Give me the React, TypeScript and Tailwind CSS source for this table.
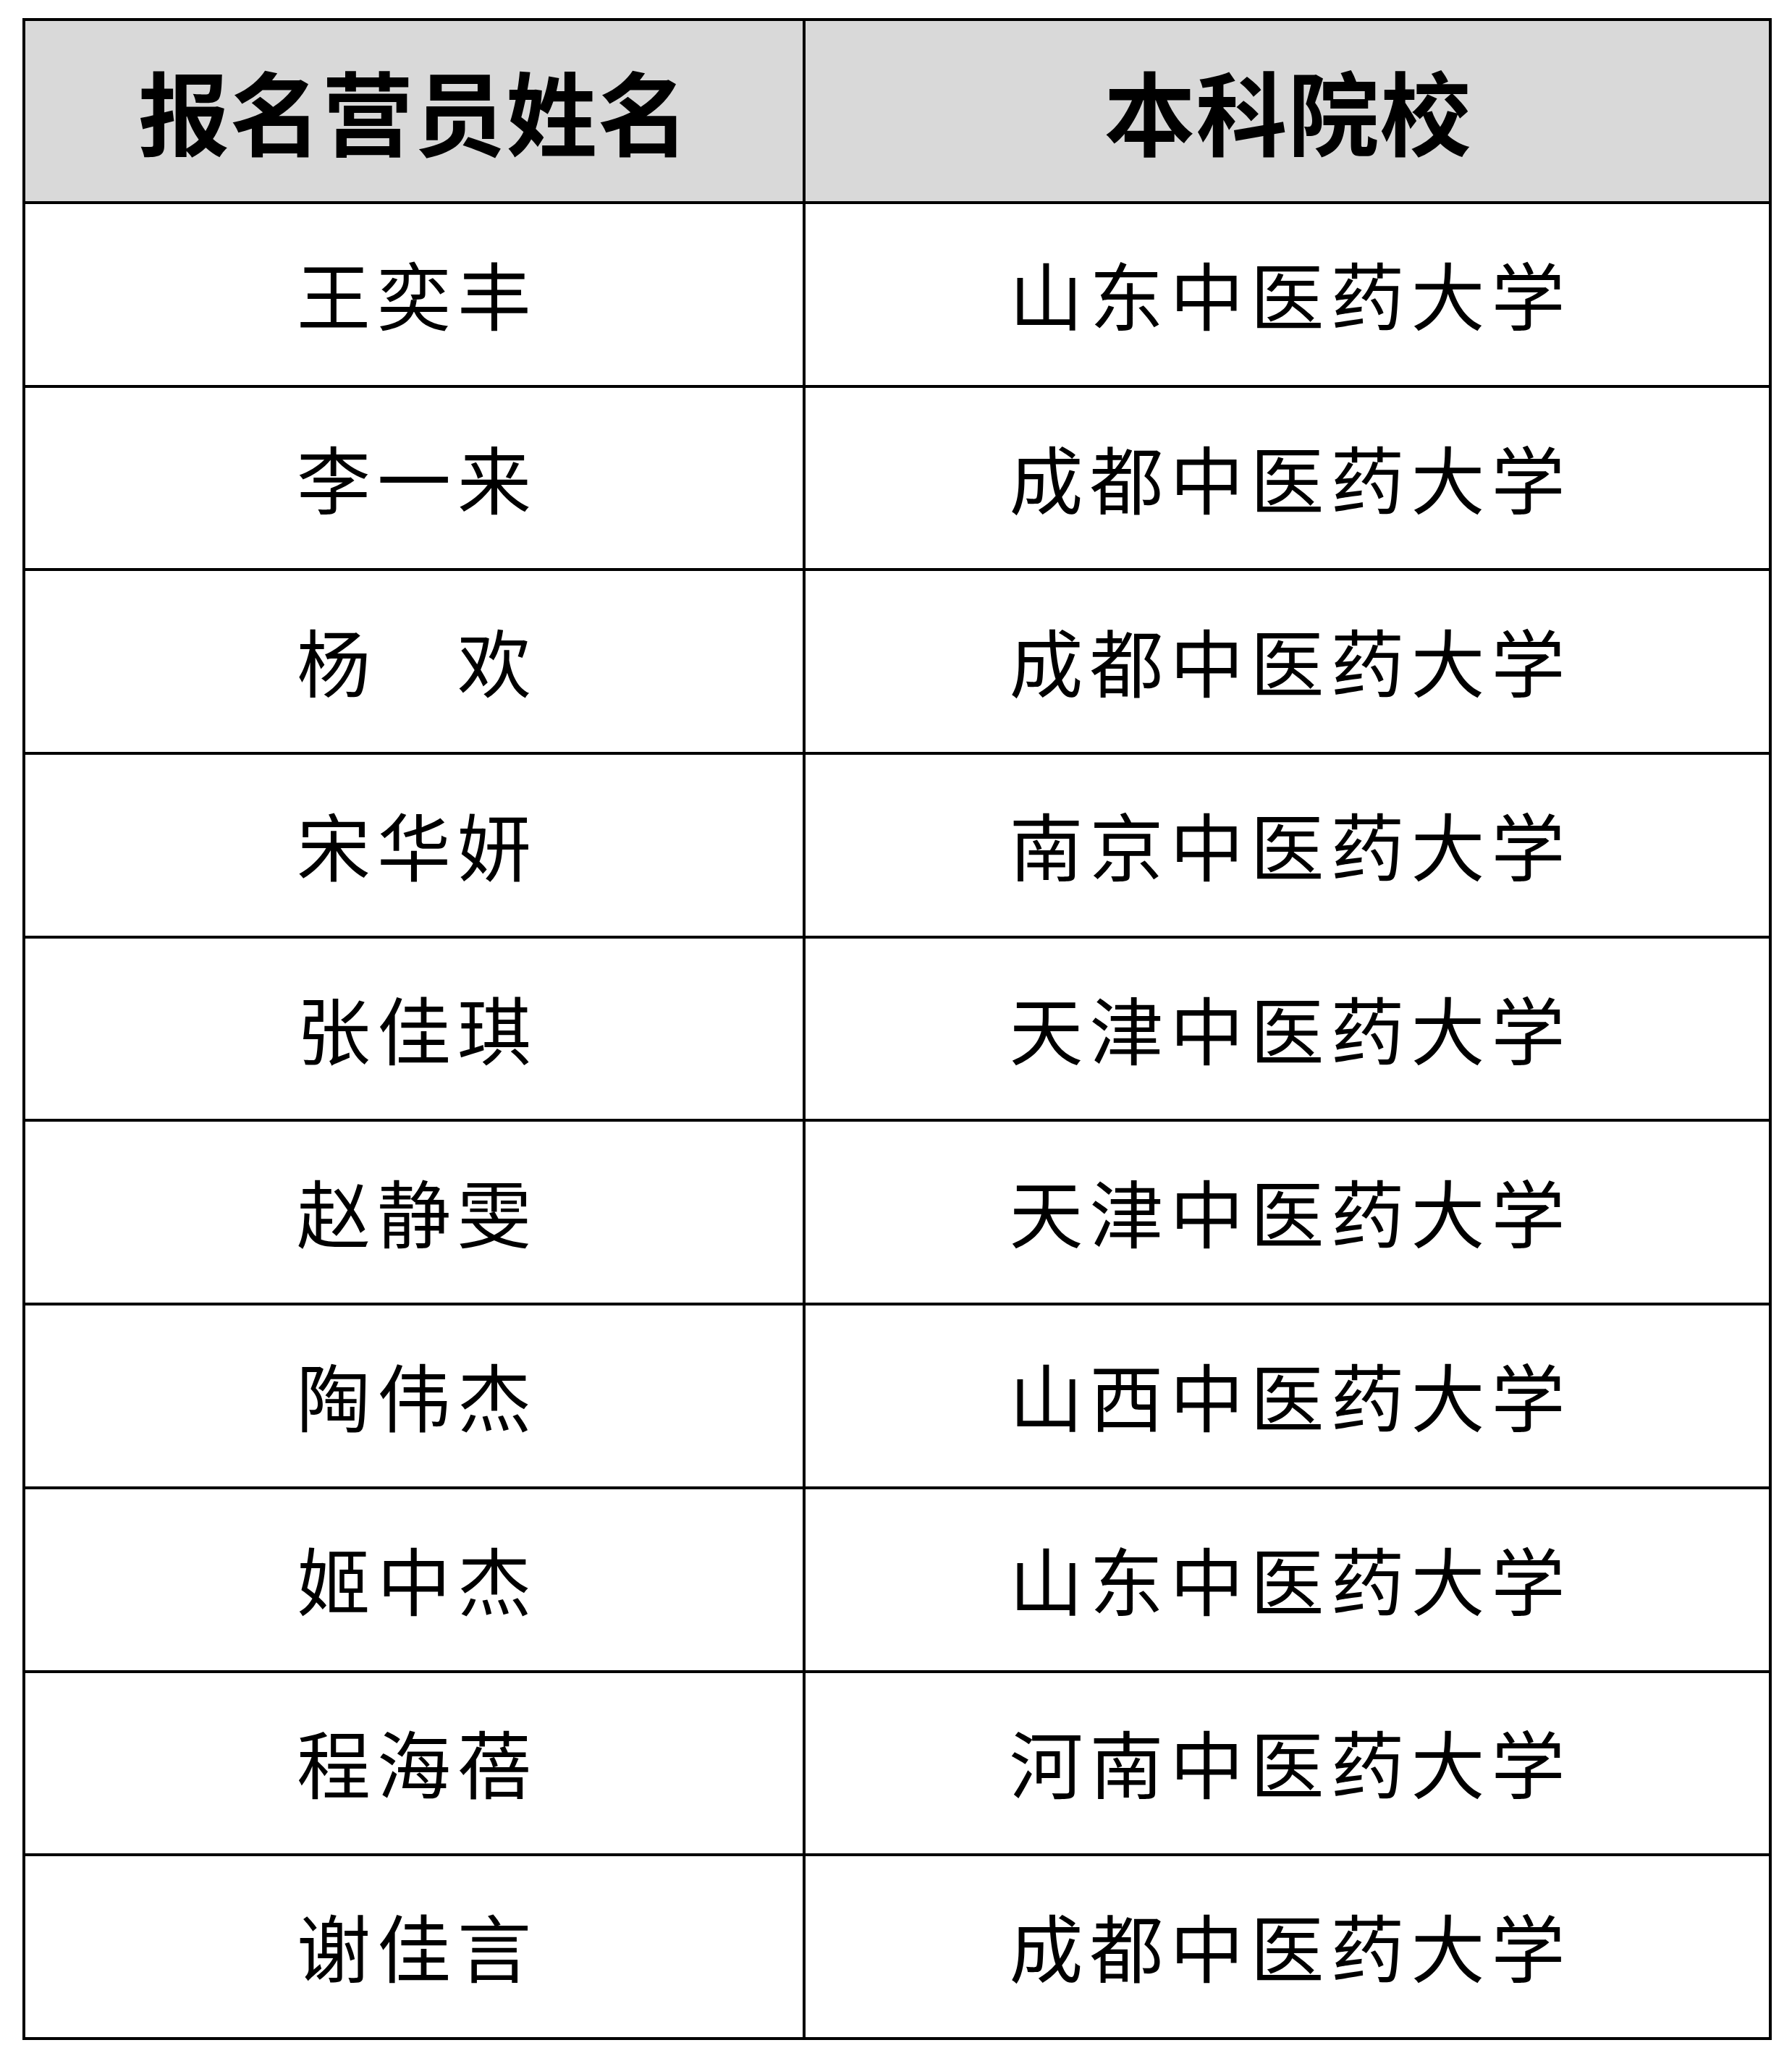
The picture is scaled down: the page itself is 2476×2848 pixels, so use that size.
const rows: [string, string][] = [
  ['王奕丰', '山东中医药大学'],
  ['李一来', '成都中医药大学'],
  ['杨　欢', '成都中医药大学'],
  ['宋华妍', '南京中医药大学'],
  ['张佳琪', '天津中医药大学'],
  ['赵静雯', '天津中医药大学'],
  ['陶伟杰', '山西中医药大学'],
  ['姬中杰', '山东中医药大学'],
  ['程海蓓', '河南中医药大学'],
  ['谢佳言', '成都中医药大学'],
]

const font = "font-['Noto_Sans_CJK_SC','Noto_Sans_CJK_JP',sans-serif]"

export default function App() {
  return (
    <div className={`min-h-[2848px] w-[2476px] bg-white pl-[31px] pt-[25px] text-black ${font}`}>
      <div className="w-[2417px] border-4 border-black">
        {/* Header */}
        <div className="flex h-[253px] border-b-4 border-black bg-[#d9d9d9] text-[126px] font-bold leading-none tracking-[1px]">
          <div className="flex w-[1078px] items-center justify-center border-r-4 border-black pb-[6px]">
            报名营员姓名
          </div>
          <div className="flex flex-1 items-center justify-center pb-[6px] pl-[2px]">本科院校</div>
        </div>

        {/* Body rows */}
        {rows.map(([name, school], i) => (
          <div
            key={i}
            className={`flex text-[102px] font-normal leading-none tracking-[9px] ${
              i < rows.length - 1 ? 'h-[253.7px] border-b-4 border-black' : 'h-[249.7px]'
            }`}
          >
            <div className="flex w-[1078px] items-center justify-center border-r-4 border-black pb-[4px] pl-[9px]">
              {name}
            </div>
            <div className="flex flex-1 items-center justify-center pb-[4px] pl-[9px]">{school}</div>
          </div>
        ))}
      </div>
    </div>
  )
}
